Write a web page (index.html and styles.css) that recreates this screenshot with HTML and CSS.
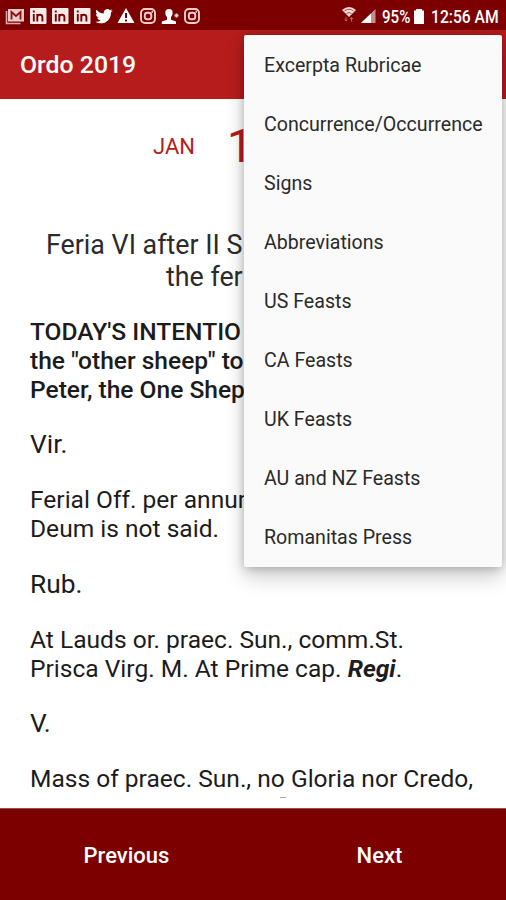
FILE: index.html
```html
<!DOCTYPE html>
<html lang="en">
<head>
<meta charset="utf-8">
<title>Ordo 2019</title>
<link rel="stylesheet" href="styles.css">
</head>
<body>
<div class="status">
  <div class="notes">
    <svg viewBox="0 0 20 18" width="20" height="18"><path d="M1.500 4v12.500h14" fill="none" stroke="#dba8a8" stroke-width="1.600"/><path d="M3 2h16v12.500H3z" fill="#edc9c9"/><path d="M6.500 12.500V5l4.500 4 4.500-4v7.500" fill="none" stroke="#8a1010" stroke-width="1.800"/></svg>
    <svg viewBox="0 0 18 18" width="18" height="18"><use href="#linked"/></svg>
    <svg viewBox="0 0 18 18" width="18" height="18"><use href="#linked"/></svg>
    <svg viewBox="0 0 18 18" width="18" height="18"><use href="#linked"/></svg>
    <svg viewBox="0 0 24 24" width="18" height="18"><path fill="#fff" d="M23.600 4.900c-.8.400-1.800.7-2.700.8 1-.6 1.700-1.500 2.100-2.600-.9.500-1.900.9-3 1.100A4.800 4.800 0 0 0 11.800 8.600C7.900 8.400 4.300 6.500 2 3.600c-1.300 2.200-.7 5 1.500 6.400-.8 0-1.500-.2-2.200-.6 0 2.300 1.600 4.300 3.800 4.800-.7.200-1.400.2-2.100.1.600 1.900 2.400 3.300 4.500 3.300-2 1.600-4.500 2.300-7 2 9.700 6.100 21.300-1.200 20.700-12.200 1-.7 1.800-1.600 2.400-2.500z"/></svg>
    <svg viewBox="0 0 18 18" width="18" height="18"><path d="M9 1l8.500 15h-17z" fill="#fff"/><path d="M9 6v5M9 12.500v2" stroke="#7c0000" stroke-width="2"/></svg>
    <svg viewBox="0 0 18 18" width="18" height="18"><use href="#camera"/></svg>
    <svg viewBox="0 0 18 18" width="18" height="18"><path fill="#fff" d="M8 2c2.800 0 4 2 3.600 4.600-.3 1.800-1 2.800-1.600 3.500v2.700l5 1.700V17H.8v-2.500L6 12.800v-2.700C4.800 8.900 4.200 7.300 4.300 5.300 4.400 3.300 5.500 2 8 2z"/><path d="M13.500 8.500h4M15.500 6.500v4" stroke="#f3d9d9" stroke-width="1.800"/></svg>
    <svg viewBox="0 0 18 18" width="18" height="18"><use href="#camera"/></svg>
  </div>
  <div class="system">
    <svg class="wifi" viewBox="0 0 16 18" width="16" height="18"><path d="M1 5q7-6 14 0L8 12z" fill="#f3d9d9"/><path d="M3.500 6q4.500-3.500 9 0M5.500 8.500q2.500-2 5 0" fill="none" stroke="#9c3030" stroke-width=".8"/><path d="M5 12v4M3.500 14.500L5 16l1-1.500M10.500 16.500v-4M9 14l1.500-1.500L12 14" fill="none" stroke="#b66"/></svg>
    <svg class="signal" viewBox="0 0 15 16" width="15" height="16"><path d="M0 15L14.500 1v14z" fill="#c98b8b"/><path d="M0 15L10 5.500V15z" fill="#fff"/></svg>
    <span class="percent">95%</span>
    <svg class="battery" viewBox="0 0 10 15" width="10" height="15"><path d="M0 1.500h2V0h6v1.500h2V15H0z" fill="#fff"/></svg>
    <span class="clock">12:56 AM</span>
  </div>
</div>
<svg class="defs" width="0" height="0"><defs>
  <g id="linked"><rect x="1" y="1" width="16.500" height="16" rx="1" fill="#f9eaea"/><path d="M4.800 7v7.500M4.800 3.500v2M8.300 14.500V7M8.300 10q.3-2.300 2.600-2.300t2.500 2.300v4.500" fill="none" stroke="#7c0000" stroke-width="1.900"/></g>
  <g id="camera" fill="none" stroke="#f1cccc" stroke-width="1.900"><rect x="2" y="2" width="14" height="14" rx="4"/><rect x="5.800" y="5.800" width="6.500" height="6.500" rx="2.500"/><path d="M12.500 4.800h1.500"/></g>
</defs></svg>
<header class="appbar">Ordo 2019</header>
<main class="content">
  <div class="date"><span class="month">JAN</span><span class="day">1</span></div>
  <div class="feast"><span class="f1">Feria VI after II S</span><span class="f2">the fer</span></div>
  <p class="bold">TODAY'S INTENTIO<br>the "other sheep" to<br>Peter, the One Shep</p>
  <p class="mark">Vir.</p>
  <p>Ferial Off. per annur<br>Deum is not said.</p>
  <p class="mark">Rub.</p>
  <p>At Lauds or. praec. Sun., comm.St.<br>Prisca Virg. M. At Prime cap. <b><i>Regi</i></b>.</p>
  <p class="mark">V.</p>
  <p>Mass of praec. Sun., no Gloria nor Credo,</p>
  <div class="sliver"></div>
</main>
<footer class="pager"><span class="prev">Previous</span><span class="next">Next</span></footer>
<nav class="menu">
  <a>Excerpta Rubricae</a>
  <a>Concurrence/Occurrence</a>
  <a>Signs</a>
  <a>Abbreviations</a>
  <a>US Feasts</a>
  <a>CA Feasts</a>
  <a>UK Feasts</a>
  <a>AU and NZ Feasts</a>
  <a>Romanitas Press</a>
</nav>
</body>
</html>
```
FILE: styles.css
```css
* { box-sizing: border-box; }
body { margin: 0; width: 506px; height: 900px; overflow: hidden; position: relative; display: flex; flex-direction: column; background: #fff; color: #1c1c1c; font-family: Roboto, "Liberation Sans", sans-serif; }
svg { display: block; flex: none; }
.defs { position: absolute; }
.status { height: 30px; flex: none; background: #7c0000; color: #fff; display: flex; justify-content: space-between; padding: 0 8px 0 5px; }
.notes { display: flex; align-items: center; gap: 4px; padding-top: 1px; }
.system { display: flex; align-items: center; font-size: 18px; font-weight: 500; padding-top: 2px; white-space: nowrap; }
.wifi { margin-right: 4px; margin-bottom: 4px; }
.signal { margin-right: 6px; }
.percent { width: 29px; transform: scaleX(.84); transform-origin: 0 50%; }
.battery { margin: 0 7px 0 3px; }
.clock { width: 67px; transform: scaleX(.87); transform-origin: 0 50%; }
.appbar { height: 69px; flex: none; background: #b71c1c; color: #fff; font-size: 24.800px; font-weight: 500; line-height: 70px; padding-left: 20px; }
.content { flex: 1; min-height: 0; overflow: hidden; padding: 0 30px; white-space: nowrap; }
.date { height: 130px; display: flex; color: #b71c1c; padding-left: 123px; line-height: 95px; }
.month { width: 74px; font-size: 22px; }
.day { font-size: 46px; }
.feast { display: flex; flex-direction: column; font-size: 26.800px; line-height: 32px; height: 88px; color: #2b2b2b; }
.f1 { padding-left: 16px; }
.f2 { padding-left: 136px; }
p { margin: 0 0 26.200px; font-size: 24.550px; line-height: 29px; }
.bold { font-weight: 500; }
.mark { font-size: 26.300px; }
.sliver { width: 6px; height: 1px; margin: -22px 0 0 250px; background: #aaa; }
.pager { height: 92px; flex: none; background: #7c0000; border-top: 1px solid #a05050; color: #fff; display: flex; font-size: 22px; font-weight: 500; line-height: 93px; text-align: center; }
.pager span { flex: 1; }
.menu { position: absolute; left: 244px; top: 35px; width: 258px; height: 532px; background: #fafafa; border-radius: 2px; box-shadow: 0 10px 20px rgba(0,0,0,.2), 0 1px 10px rgba(0,0,0,.22); display: flex; flex-direction: column; color: #2a2a2a; }
.menu a { height: 59px; line-height: 61px; padding-left: 20px; font-size: 19.600px; }
```
